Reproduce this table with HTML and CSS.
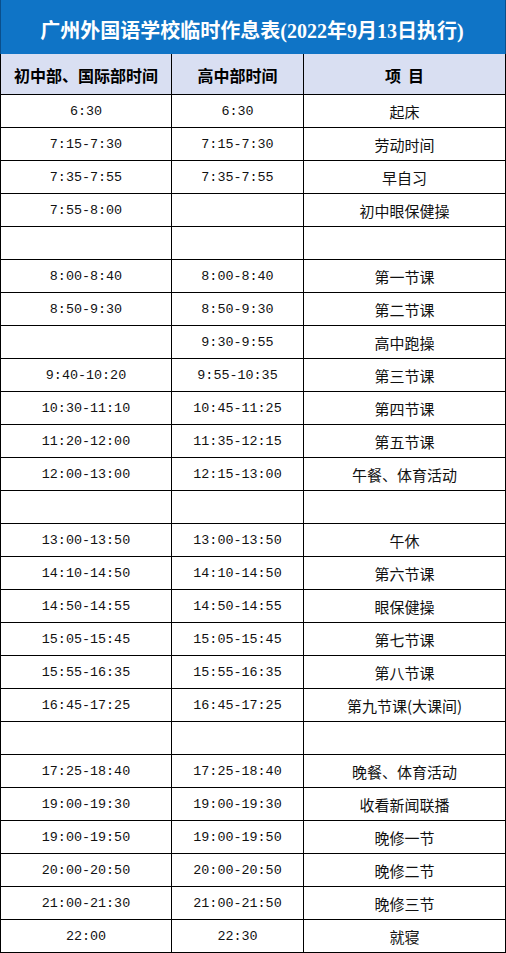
FILE: index.html
```html
<!DOCTYPE html>
<html lang="zh-CN">
<head>
<meta charset="utf-8">
<title>广州外国语学校临时作息表</title>
<link rel="stylesheet" href="styles.css">
</head>
<body>
<div class="sheet">
  <div class="title">广州外国语学校临时作息表(2022年9月13日执行)</div>
  <div class="grid">
    <div class="cell head">初中部、国际部时间</div>
    <div class="cell head">高中部时间</div>
    <div class="cell head">项<span class="gap"></span>目</div>

    <div class="cell t">6:30</div><div class="cell t">6:30</div><div class="cell c">起床</div>
    <div class="cell t">7:15-7:30</div><div class="cell t">7:15-7:30</div><div class="cell c">劳动时间</div>
    <div class="cell t">7:35-7:55</div><div class="cell t">7:35-7:55</div><div class="cell c">早自习</div>
    <div class="cell t">7:55-8:00</div><div class="cell t"></div><div class="cell c">初中眼保健操</div>
    <div class="cell t"></div><div class="cell t"></div><div class="cell c"></div>
    <div class="cell t">8:00-8:40</div><div class="cell t">8:00-8:40</div><div class="cell c">第一节课</div>
    <div class="cell t">8:50-9:30</div><div class="cell t">8:50-9:30</div><div class="cell c">第二节课</div>
    <div class="cell t"></div><div class="cell t">9:30-9:55</div><div class="cell c">高中跑操</div>
    <div class="cell t">9:40-10:20</div><div class="cell t">9:55-10:35</div><div class="cell c">第三节课</div>
    <div class="cell t">10:30-11:10</div><div class="cell t">10:45-11:25</div><div class="cell c">第四节课</div>
    <div class="cell t">11:20-12:00</div><div class="cell t">11:35-12:15</div><div class="cell c">第五节课</div>
    <div class="cell t">12:00-13:00</div><div class="cell t">12:15-13:00</div><div class="cell c">午餐、体育活动</div>
    <div class="cell t"></div><div class="cell t"></div><div class="cell c"></div>
    <div class="cell t">13:00-13:50</div><div class="cell t">13:00-13:50</div><div class="cell c">午休</div>
    <div class="cell t">14:10-14:50</div><div class="cell t">14:10-14:50</div><div class="cell c">第六节课</div>
    <div class="cell t">14:50-14:55</div><div class="cell t">14:50-14:55</div><div class="cell c">眼保健操</div>
    <div class="cell t">15:05-15:45</div><div class="cell t">15:05-15:45</div><div class="cell c">第七节课</div>
    <div class="cell t">15:55-16:35</div><div class="cell t">15:55-16:35</div><div class="cell c">第八节课</div>
    <div class="cell t">16:45-17:25</div><div class="cell t">16:45-17:25</div><div class="cell c">第九节课(大课间)</div>
    <div class="cell t"></div><div class="cell t"></div><div class="cell c"></div>
    <div class="cell t">17:25-18:40</div><div class="cell t">17:25-18:40</div><div class="cell c">晚餐、体育活动</div>
    <div class="cell t">19:00-19:30</div><div class="cell t">19:00-19:30</div><div class="cell c">收看新闻联播</div>
    <div class="cell t">19:00-19:50</div><div class="cell t">19:00-19:50</div><div class="cell c">晚修一节</div>
    <div class="cell t">20:00-20:50</div><div class="cell t">20:00-20:50</div><div class="cell c">晚修二节</div>
    <div class="cell t">21:00-21:30</div><div class="cell t">21:00-21:50</div><div class="cell c">晚修三节</div>
    <div class="cell t">22:00</div><div class="cell t">22:30</div><div class="cell c">就寝</div>
  </div>
</div>
</body>
</html>
```

FILE: styles.css
```css
html, body {
  margin: 0;
  padding: 0;
  background: #ffffff;
}

.sheet {
  width: 506px;
  font-family: "Noto Sans CJK SC", sans-serif;
  color: #000;
}

.title {
  height: 54px;
  box-sizing: border-box;
  background: #0f74c6;
  border-left: 1px solid #0a4f8c;
  border-right: 1px solid #0a4f8c;
  color: #ffffff;
  font-family: "Liberation Serif", "Noto Sans CJK SC", serif;
  font-weight: 700;
  font-size: 20px;
  display: flex;
  align-items: center;
  justify-content: center;
  padding-top: 4px;
  padding-right: 2px;
}

.grid {
  display: grid;
  grid-template-columns: 171px 132px 202px;
  grid-template-rows: 41px;
  grid-auto-rows: 33px;
  border-left: 1px solid #000;
}

.cell {
  box-sizing: border-box;
  border-right: 1px solid #000;
  border-bottom: 1px solid #000;
  display: flex;
  align-items: center;
  justify-content: center;
  white-space: nowrap;
}

.head {
  background: #d9dff2;
  font-weight: 700;
  font-size: 16px;
  padding-top: 2px;
}

.gap {
  display: inline-block;
  width: 7px;
}

.t {
  font-family: "Liberation Mono", monospace;
  font-size: 13.4px;
  color: #111;
  padding-top: 1px;
}

.c {
  font-size: 15px;
  color: #111;
}
```
